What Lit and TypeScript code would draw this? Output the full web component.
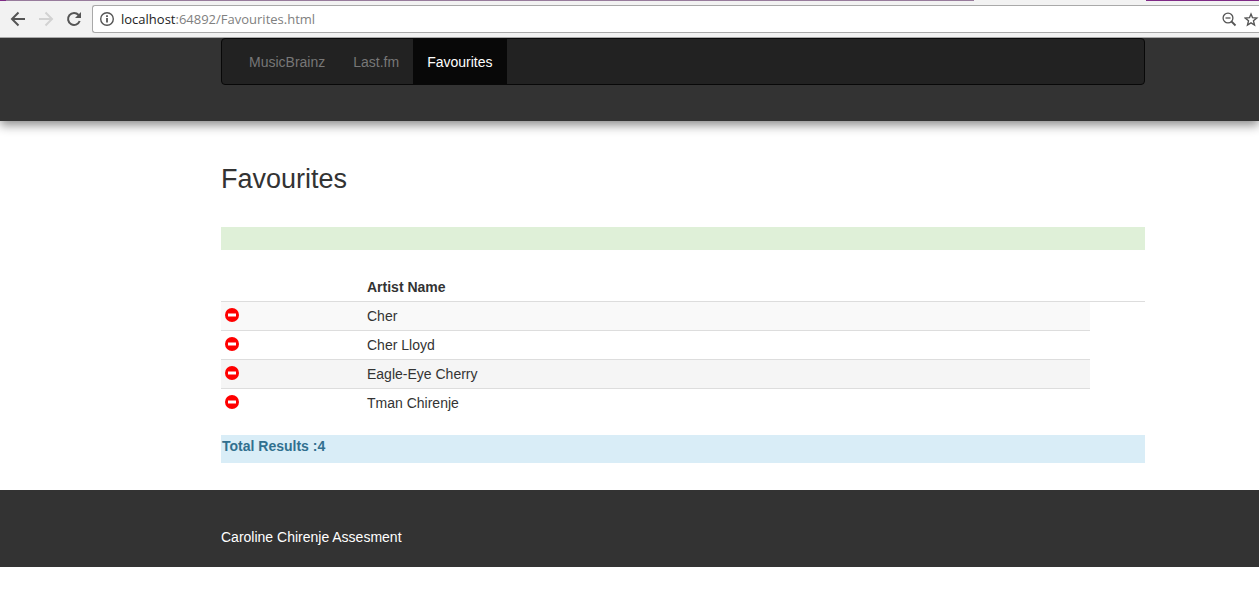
import { LitElement, html, css } from "lit";
import { customElement, state } from "lit/decorators.js";

@customElement("browser-bar")
class BrowserBar extends LitElement {
  static styles = css`
    :host {
      display: block;
      background: #f2f2f2;
      border-bottom: 1px solid #a9a9a9;
    }
    .tabs {
      display: flex;
      height: 1px;
    }
    .strip {
      flex: 1;
      background: linear-gradient(90deg, #7f2a86 0 6px, #987c9c 6px);
    }
    .gap {
      width: 172px;
    }
    .end {
      width: 113px;
      background: #7f2a86;
    }
    .toolbar {
      display: flex;
      align-items: center;
      padding: 4px 0 4px 10px;
    }
    button {
      display: flex;
      border: 0;
      padding: 0;
      background: none;
      color: #555;
    }
    button:disabled {
      color: #d2d2d2;
    }
    svg {
      display: block;
    }
    .nav {
      display: flex;
      gap: 12px;
      margin-right: 10px;
    }
    .omnibox {
      flex: 1;
      display: flex;
      align-items: center;
      height: 26px;
      padding-left: 6px;
      background: #fff;
      border: 1px solid #a9a9a9;
      border-right: 0;
      border-radius: 3px 0 0 3px;
      color: #555;
    }
    .url {
      flex: 1;
      margin-left: 6px;
      font: 13px/20px "Open Sans", sans-serif;
      color: #808080;
    }
    .host {
      color: #222;
    }
    .actions {
      display: flex;
      gap: 7px;
    }
  `;
  render() {
    return html`
      <div class="tabs"><div class="strip"></div><div class="gap"></div><div class="end"></div></div>
      <div class="toolbar">
        <div class="nav">
          <button aria-label="Back">
            <svg width="16" height="16" viewBox="0 0 16 16" fill="none" stroke="currentColor" stroke-width="2"><path d="M15 8H2.500M8.500 1.500L2 8l6.500 6.500" /></svg>
          </button>
          <button aria-label="Forward" disabled>
            <svg width="16" height="16" viewBox="0 0 16 16" fill="none" stroke="currentColor" stroke-width="2"><path d="M1 8h12.500M7.500 1.500L14 8l-6.500 6.500" /></svg>
          </button>
          <button aria-label="Reload">
            <svg width="16" height="16" viewBox="0 0 16 16" fill="none" stroke="currentColor" stroke-width="2"><path d="M13.700 10A6 6 0 1 1 12.600 4" /><path d="M15 1v6H9z" fill="currentColor" stroke="none" /></svg>
          </button>
        </div>
        <div class="omnibox">
          <svg width="16" height="16" viewBox="0 0 16 16" fill="none" stroke="currentColor"><circle cx="8" cy="8" r="6.300" stroke-width="1.400" /><path d="M8 7v4.500M8 4.200v1.800" stroke-width="1.800" /></svg>
          <div class="url"><span class="host">localhost</span>:64892/Favourites.html</div>
          <div class="actions">
            <button aria-label="Zoom">
              <svg width="15" height="15" viewBox="0 0 15 15" fill="none" stroke="currentColor" stroke-width="1.300"><circle cx="6" cy="6" r="4.900" /><path d="M3.500 6h5" /><path d="M9.500 9.500L13.500 13.500" stroke-width="1.800" /></svg>
            </button>
            <button aria-label="Bookmark">
              <svg width="15" height="15" viewBox="0 0 15 15" fill="none" stroke="currentColor" stroke-width="1.400"><path d="M7 2l1.500 3.700 4.300.3-3.300 2.800 1 4.200L7 10.800 3.500 13l1-4.200L1.200 6l4.300-.3z" /></svg>
            </button>
          </div>
        </div>
      </div>
    `;
  }
}

@customElement("app-root")
class AppRoot extends LitElement {
  static styles = css`
    :host {
      display: block;
      min-height: 100vh;
      background: #fff;
      color: #333;
      font: 14px/20px "Liberation Sans", Arial, sans-serif;
    }
    .wrap {
      padding-left: 221px;
      padding-right: 114px;
    }
    header {
      background: #333;
      padding-bottom: 36px;
      box-shadow: 0 4px 10px #0007;
    }
    browser-bar {
      position: relative;
    }
    nav {
      display: flex;
      padding-left: 13px;
      background: #222;
      border: 1px solid #080808;
      border-radius: 4px;
    }
    nav a {
      padding: 13px 14px 12px;
      color: #777;
      text-decoration: none;
    }
    nav a.active {
      background: #080808;
      color: #fff;
    }
    h2 {
      margin: 0;
      padding: 42px 0 31px;
      font-size: 27px;
      line-height: 33px;
      font-weight: 400;
    }
    .message {
      height: 23px;
      background: #dff0d8;
    }
    table {
      width: 100%;
      margin-top: 23px;
      border-collapse: separate;
      border-spacing: 0;
      table-layout: fixed;
      font-size: 14px;
    }
    .c-action {
      width: 142px;
    }
    .c-end {
      width: 55px;
    }
    th,
    td {
      padding: 4px;
      text-align: left;
      height: 20px;
      border-bottom: 1px solid #ddd;
    }
    td:last-child,
    tr:last-child td {
      border-bottom: 0;
    }
    tr:nth-child(odd) td:not(:last-child) {
      background: #f9f9f9;
    }
    tr:nth-child(3) td:not(:last-child) {
      background: #f5f5f5;
    }
    .remove {
      display: block;
      border: 0;
      padding: 0;
      background: none;
      color: #f00;
    }
    .remove svg {
      display: block;
      margin-bottom: 2px;
    }
    .total {
      margin-top: 18px;
      padding: 1px 1px 7px;
      background: #d9edf7;
      color: #31708f;
      font-weight: 700;
    }
    footer {
      margin-top: 27px;
      padding-top: 37px;
      padding-bottom: 20px;
      background: #333;
      color: #fff;
    }
  `;

  @state() private artists = ["Cher", "Cher Lloyd", "Eagle-Eye Cherry", "Tman Chirenje"];

  private remove(name: string) {
    this.artists = this.artists.filter((a) => a !== name);
  }

  render() {
    return html`
      <browser-bar></browser-bar>
      <header class="wrap">
        <nav>
          <a href="#musicbrainz">MusicBrainz</a>
          <a href="#lastfm">Last.fm</a>
          <a href="#favourites" class="active">Favourites</a>
        </nav>
      </header>
      <main class="wrap">
        <h2>Favourites</h2>
        <div class="message" role="status"></div>
        <table>
          <colgroup><col class="c-action" /><col /><col class="c-end" /></colgroup>
          <thead>
            <tr><th></th><th>Artist Name</th><th></th></tr>
          </thead>
          <tbody>
            ${this.artists.map(
              (name) => html`<tr>
                <td>
                  <button class="remove" aria-label="Remove ${name}" @click=${() => this.remove(name)}>
                    <svg width="14" height="14" viewBox="0 0 14 14"><circle cx="7" cy="7" r="7" fill="currentColor" /><path d="M3 5.500h8v3H3z" fill="#fff" /></svg>
                  </button>
                </td>
                <td>${name}</td>
                <td></td>
              </tr>`
            )}
          </tbody>
        </table>
        <div class="total">Total Results :${this.artists.length}</div>
      </main>
      <footer class="wrap">Caroline Chirenje Assesment</footer>
    `;
  }
}
